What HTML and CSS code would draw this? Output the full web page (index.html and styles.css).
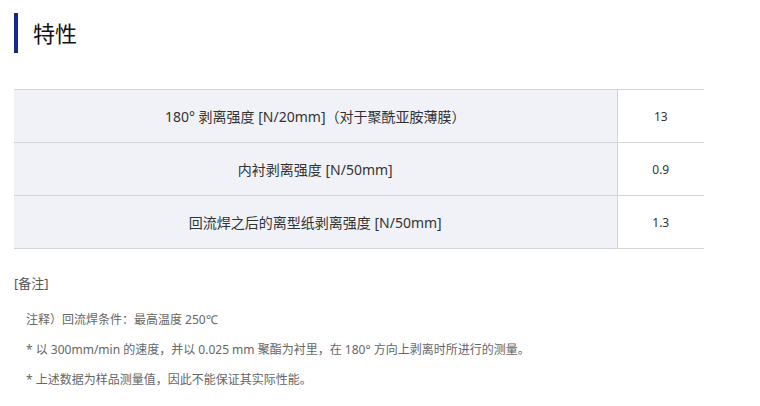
FILE: index.html
```html
<!DOCTYPE html>
<html lang="zh-CN">
<head>
<meta charset="utf-8">
<title>特性</title>
<link rel="stylesheet" href="styles.css">
</head>
<body>
<div class="page">
  <h2 class="section-title">特性</h2>
  <table class="spec-table">
    <tbody>
      <tr>
        <th>180° 剥离强度 [N/20mm]（对于聚酰亚胺薄膜）</th>
        <td>13</td>
      </tr>
      <tr>
        <th>内衬剥离强度 [N/50mm]</th>
        <td>0.9</td>
      </tr>
      <tr>
        <th>回流焊之后的离型纸剥离强度 [N/50mm]</th>
        <td>1.3</td>
      </tr>
    </tbody>
  </table>
  <div class="notes">
    <p class="notes-title">[备注]</p>
    <ul class="notes-list">
      <li>注释）回流焊条件：最高温度 250℃</li>
      <li>* 以 300mm/min 的速度，并以 0.025 mm 聚酯为衬里，在 180° 方向上剥离时所进行的测量。</li>
      <li>* 上述数据为样品测量值，因此不能保证其实际性能。</li>
    </ul>
  </div>
</div>
</body>
</html>
```

FILE: styles.css
```css
* { box-sizing: border-box; }
html, body { margin: 0; padding: 0; background: #fff; }
body {
  font-family: "Noto Sans", "Noto Sans CJK SC", sans-serif;
  color: #333;
}
.page {
  padding: 13px 0 0 14px;
  width: 704px;
}
.section-title {
  margin: 0;
  height: 40px;
  border-left: 4px solid #14298c;
  padding-left: 15px;
  font-size: 22px;
  line-height: 40px;
  font-weight: normal;
  color: #111;
}
.spec-table {
  margin-top: 36px;
  width: 690px;
  border-collapse: collapse;
}
.spec-table th,
.spec-table td {
  height: 53px;
  border-top: 1px solid #d4d4d8;
  border-bottom: 1px solid #d4d4d8;
  text-align: center;
  padding: 0;
  vertical-align: middle;
}
.spec-table th {
  background: #f1f2f7;
  font-weight: normal;
  font-size: 14px;
  color: #333;
  border-right: 1px solid #d4d4d8;
  width: 603px;
}
.spec-table td {
  background: #fff;
  font-size: 12px;
  color: #333;
}
.notes {
  padding-top: 24px;
}
.notes-title {
  margin: 0;
  font-size: 13px;
  line-height: 20px;
  color: #555;
}
.notes-list {
  list-style: none;
  margin: 12px 0 0 0;
  padding: 0 0 0 12px;
}
.notes-list li {
  font-size: 12px;
  line-height: 30px;
  color: #666;
}
```
